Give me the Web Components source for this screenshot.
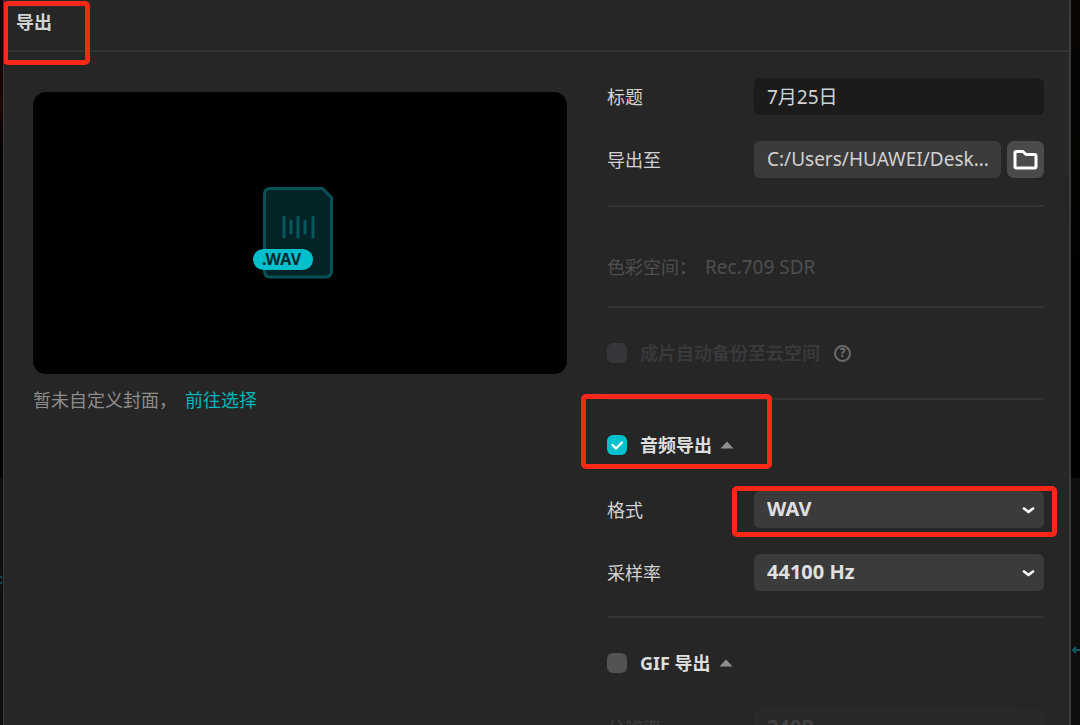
<!DOCTYPE html>
<html lang="zh-CN">
<head>
<meta charset="utf-8">
<meta name="viewport" content="width=device-width, initial-scale=1">
<title>导出</title>
<style>
  html, body { margin: 0; height: 100%; background: #000; }
  body { overflow: hidden; font: 18px/28px "Noto Sans", "Noto Sans CJK SC", sans-serif; color: #d2d2d2; }
</style>
</head>
<body>
<export-dialog></export-dialog>

<template id="t-dialog">
  <style>
    :host { display: grid; grid-template-columns: 3px minmax(0, 1fr) 9px; height: 100vh; overflow: hidden;
      --line: #323232; --accent: #00c1cd; }
    .edge { background: linear-gradient(#000 0 478px, #0f0f0f 478px); display: flex; flex-direction: column; justify-content: flex-end; }
    .edge.left { background: linear-gradient(#120606 0, #1c0506 110px, #000 150px 478px, #0f0f0f 478px); }
    .edge.right { background: linear-gradient(#0b0503 0, #060402 60px, #050300 200px, #000 300px 478px, #0e0e0e 478px); }
    .edge svg { display: block; margin-bottom: 69px; }
    .edge.left svg { margin-bottom: 139px; }
    main { box-sizing: border-box; background: #262626; border: solid #3b3b3b; border-width: 0 2px 0 1px; min-width: 0; overflow: hidden; }
    header { height: 52px; border-bottom: 2px solid #333; padding: 8px 12px 0; box-sizing: border-box; }
    h1 { margin: 0; font-size: 18px; line-height: 28px; font-weight: 700; }
    .body { display: grid; grid-template-columns: minmax(0, 534fr) minmax(0, 437fr); column-gap: 40px; padding: 0 25px 0 29px; }
    .cover { padding-top: 40px; }
    .hint { margin: 12px 0 0; color: #8c8c8c; }
    a { color: #00b5bb; text-decoration: none; margin-left: 8px; }
    .faded { opacity: .14; }
  </style>
  <div class="edge left"><svg width="3" height="12" viewBox="0 0 3 12"><path d="M0 2l2 2M0 10l2-2" stroke="#0b4a4c" stroke-width="2"/></svg></div>
  <main>
    <header><callout-mark style="--box: -7px -38px -29px -13px"><h1>导出</h1></callout-mark></header>
    <div class="body">
      <div class="cover">
        <cover-preview></cover-preview>
        <p class="hint">暂未自定义封面，<a href="#cover">前往选择</a></p>
      </div>
      <div>
        <form-section style="--top: 26px; --bottom: 27px">
          <text-field label="标题" value="7月25日"></text-field>
          <text-field label="导出至" value="C:/Users/HUAWEI/Desk..." browse></text-field>
        </form-section>
        <form-section style="--top: 46px"><info-line label="色彩空间：">Rec.709 SDR</info-line></form-section>
        <form-section style="--top: 31px; --bottom: 31px"><check-line disabled help>成片自动备份至云空间</check-line></form-section>
        <form-section style="--top: 31px">
          <callout-mark style="--box: -37px -38px -10px -26px; --gap: 6px"><check-line checked arrow>音频导出</check-line></callout-mark>
          <select-field label="格式" options="WAV,MP3,AAC,FLAC" marked></select-field>
          <select-field label="采样率" options="44100 Hz,48000 Hz"></select-field>
        </form-section>
        <form-section style="--top: 31px">
          <check-line arrow style="margin-bottom: 6px">GIF 导出</check-line>
          <select-field class="faded" label="分辨率" options="240P,320P"></select-field>
        </form-section>
      </div>
    </div>
  </main>
  <div class="edge right"><svg width="9" height="12" viewBox="0 0 9 12"><path d="M2 6h7M5 3 2 6l3 3" fill="none" stroke="#0b5a60" stroke-width="2"/></svg></div>
</template>

<template id="t-callout">
  <style>
    :host { display: block; width: fit-content; position: relative; margin-bottom: var(--gap, 0); }
    :host([fill]) { width: auto; }
    i { position: absolute; inset: var(--box); border: 5px solid #fb2818; border-radius: 5px; pointer-events: none; z-index: 2; }
  </style>
  <slot></slot><i></i>
</template>

<template id="t-section">
  <style>
    :host { display: flex; flex-direction: column; gap: 26px; padding: var(--top, 29px) 0 var(--bottom, 25px); border-bottom: 2px solid var(--line); }
  </style>
  <slot></slot>
</template>

<template id="t-text">
  <style>
    :host { display: grid; grid-template-columns: 147px minmax(0, 1fr); align-items: center; height: 37px; }
    .row { display: flex; gap: 6px; min-width: 0; }
    input { flex: 1; min-width: 0; box-sizing: border-box; height: 37px; padding: 0 13px 2px; border: 0; border-radius: 6px; background: #1b1b1b; color: inherit; font: inherit; font-size: 19px; outline: 0; }
    :host([browse]) input { background: #3b3b3b; padding-right: 4px; }
    button { display: grid; place-items: center; width: 37px; height: 37px; padding: 0; border: 0; border-radius: 7px; background: #4b4b4b; }
    button[hidden] { display: none; }
  </style>
  <label for="f"></label>
  <div class="row"><input id="f" type="text"><button type="button" aria-label="浏览"><svg width="25" height="21" viewBox="0 0 25 21"><path d="M3 2.500h7l3 3h8.500q1.500 0 1.500 1.500v10.500q0 1.500-1.500 1.500h-18q-1.500 0-1.500-1.500v-13.500q0-1.500 1-1.500z" fill="none" stroke="#fff" stroke-width="3" stroke-linejoin="round"/></svg></button></div>
</template>

<template id="t-select">
  <style>
    :host { display: grid; grid-template-columns: 147px minmax(0, 1fr); align-items: center; height: 37px; }
    .wrap { display: grid; align-items: center; }
    select, svg { grid-area: 1 / 1; }
    select { appearance: none; width: 100%; height: 37px; padding: 0 36px 2px 13px; border: 0; border-radius: 6px; background: #3b3b3b; color: #e0e0e0; font: inherit; font-size: 20px; font-weight: 700; outline: 0; }
    svg { justify-self: end; margin: 2px 9px 0 0; pointer-events: none; }
    callout-mark { --box: -5px -13px -9px -22px; }
  </style>
  <label for="s"></label>
  <div class="wrap"><select id="s"></select><svg width="13" height="9" viewBox="0 0 13 9"><path d="M2 2.500l4.500 3.500L11 2.500" fill="none" stroke="#f2f2f2" stroke-width="2.800" stroke-linecap="round" stroke-linejoin="round"/></svg></div>
</template>

<template id="t-info">
  <style>
    :host { display: flex; height: 28px; color: #4e4e4e; gap: 8px; }
    .value { font-size: 19px; }
  </style>
  <span class="name"></span><span class="value"><slot></slot></span>
</template>

<template id="t-check">
  <style>
    :host { display: flex; align-items: center; height: 28px; color: #dedede; font-weight: 700; }
    :host([disabled]) { color: #39393b; }
    input { appearance: none; flex: none; width: 20px; height: 20px; margin: 0; border-radius: 6px; background: #535353; }
    input:checked { background: var(--accent); }
    input:disabled { background: #37373b; }
    .box { display: grid; place-items: center; margin-right: 13px; }
    .box > * { grid-area: 1 / 1; }
    .box svg { pointer-events: none; }
    .arrow { margin-left: 8px; }
    .help { box-sizing: border-box; width: 17px; height: 17px; margin: 0 0 0 14px; padding: 0; border: 2px solid #696969; border-radius: 50%; background: none; color: #777; font: 700 12px/12px "Noto Sans", sans-serif; }
    [hidden] { display: none; }
  </style>
  <span class="box"><input id="c" type="checkbox"><svg class="tick" width="20" height="20" viewBox="0 0 20 20"><path d="M5.500 10l3.500 3.500 6-6" fill="none" stroke="#fff" stroke-width="2.400" stroke-linecap="round" stroke-linejoin="round"/></svg></span>
  <label for="c"><slot></slot></label>
  <svg class="arrow" width="14" height="8" viewBox="0 0 14 8"><path d="M7 0.500 13.500 7.500H0.500z" fill="#8f8f8f"/></svg>
  <button class="help" type="button">?</button>
</template>

<template id="t-cover">
  <style>
    :host { display: grid; place-items: center; aspect-ratio: 534 / 282; border-radius: 13px; background: #000; }
    svg { display: block; margin-right: 14px; }
    text { font: 700 16px "Noto Sans", sans-serif; fill: #032a30; }
  </style>
  <svg width="82" height="92" viewBox="0 0 82 92" role="img" aria-label="WAV">
    <path d="M18 1.500h52.500l9 9V84q0 6-6 6H18q-5.500 0-5.500-6V7.500q0-6 5.500-6z" fill="#032427" stroke="#075257" stroke-width="3" stroke-linejoin="round"/>
    <path d="M32 30v20M39 34v12M46 30v20M53 34v12M61 30v20" stroke="#07575d" stroke-width="3" stroke-linecap="round"/>
    <rect x="1" y="62" width="60" height="21" rx="10.500" fill="#00bfcd"/>
    <text x="10" y="78">.WAV</text>
  </svg>
</template>

<script>
  class Base extends HTMLElement {
    constructor() {
      super();
      this.attachShadow({ mode: "open" }).append(
        document.getElementById(this.constructor.template).content.cloneNode(true));
    }
    $(selector) { return this.shadowRoot.querySelector(selector); }
  }
  customElements.define("callout-mark", class extends Base { static template = "t-callout"; });
  customElements.define("form-section", class extends Base { static template = "t-section"; });
  customElements.define("cover-preview", class extends Base { static template = "t-cover"; });
  customElements.define("text-field", class extends Base {
    static template = "t-text";
    connectedCallback() {
      this.$("label").textContent = this.getAttribute("label");
      this.$("input").value = this.getAttribute("value");
      this.$("input").readOnly = this.hasAttribute("browse");
      this.$("button").hidden = !this.hasAttribute("browse");
    }
  });
  customElements.define("select-field", class extends Base {
    static template = "t-select";
    connectedCallback() {
      this.$("label").textContent = this.getAttribute("label");
      this.$("select").replaceChildren(...this.getAttribute("options").split(",").map(t => new Option(t)));
      if (this.hasAttribute("marked")) {
        const mark = document.createElement("callout-mark");
        mark.setAttribute("fill", "");
        const wrap = this.$(".wrap");
        wrap.replaceWith(mark);
        mark.append(wrap);
      }
    }
  });
  customElements.define("info-line", class extends Base {
    static template = "t-info";
    connectedCallback() { this.$(".name").textContent = this.getAttribute("label"); }
  });
  customElements.define("check-line", class extends Base {
    static template = "t-check";
    connectedCallback() {
      const has = name => this.hasAttribute(name);
      this.$("input").checked = has("checked");
      this.$("input").disabled = has("disabled");
      if (!has("checked")) this.$(".tick").remove();
      if (!has("arrow")) this.$(".arrow").remove();
      this.$(".help").hidden = !has("help");
    }
  });
  customElements.define("export-dialog", class extends Base { static template = "t-dialog"; });
</script>
</body>
</html>
